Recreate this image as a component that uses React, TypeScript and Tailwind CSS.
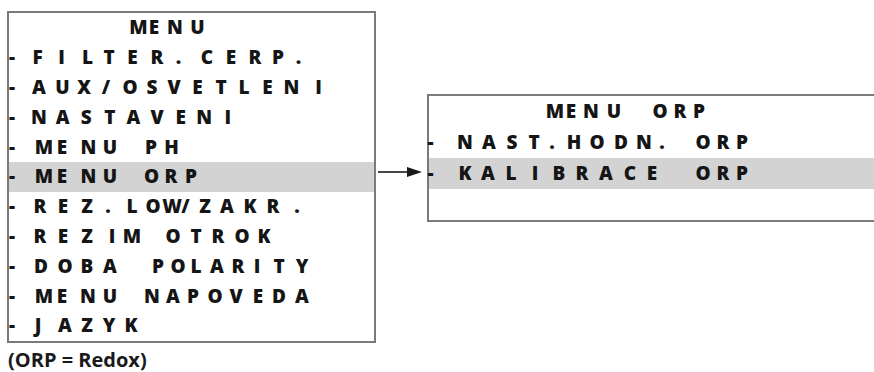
import React from "react";

type Item = [string, number];

function mk(text: string, xs: number[]): Item[] {
  const chars = text.split("");
  return chars.map((c, i) => [c, xs[i]] as Item);
}

const W = 24;

function Line({ items, originX, dashX, hl, h }: { items: Item[]; originX: number; dashX?: number; hl?: boolean; h: "left" | "right" }) {
  const all: Item[] = dashX !== undefined ? [["-", dashX], ...items] : items;
  return (
    <div
      className={
        (h === "left" ? "h-[29.8px] " : "h-[31px] ") +
        (hl ? "bg-[#d3d3d3] " : "") +
        "flex items-center whitespace-nowrap"
      }
    >
      {all.map(([ch, x], i) => {
        const prev = i === 0 ? originX : all[i - 1][1] + W / 2;
        const ml = x - W / 2 - prev;
        return (
          <span key={i} className="inline-block shrink-0 text-center" style={{ width: W, marginLeft: ml }}>
            {ch}
          </span>
        );
      })}
    </div>
  );
}

const LD = 12;
const RD = 430.5;

const leftRows: { items: Item[]; dash: boolean; hl?: boolean }[] = [
  { items: mk("MENU", [138.5, 154, 175, 197.5]), dash: false },
  { items: mk("FILTER.CERP.", [37.5, 61.5, 87.5, 109, 132.5, 157, 178.5, 207, 231, 255, 278, 298.5]), dash: true },
  { items: mk("AUX/OSVETLENI", [39, 62.5, 84, 106, 130, 152, 174, 197.5, 221, 244, 267.5, 291.5, 318.5]), dash: true },
  { items: mk("NASTAVENI", [39, 62.6, 86.2, 109.8, 133.4, 157, 180.6, 204.2, 227.8]), dash: true },
  { items: mk("MENUPH", [44, 62, 88.5, 110, 151, 171.5]), dash: true },
  { items: mk("MENUORP", [44, 62, 88.5, 110, 151.5, 171, 191]), dash: true, hl: true },
  { items: mk("REZ.LOW/ZAKR.", [40, 63, 87, 108, 132, 153, 172, 185.5, 205, 227, 250, 273, 297]), dash: true },
  { items: mk("REZIMOTROK", [40, 63, 87, 112, 132, 173, 196, 218, 242, 264]), dash: true },
  { items: mk("DOBAPOLARITY", [41, 65, 87, 110, 158, 178, 196, 217, 238, 257, 279, 302]), dash: true },
  { items: mk("MENUNAPOVEDA", [44, 62, 88, 110, 152, 173, 193, 215, 236, 258, 279, 302]), dash: true },
  { items: mk("JAZYK", [38, 65, 87, 109, 131]), dash: true },
];

const rightRows: { items: Item[]; dash: boolean; hl?: boolean }[] = [
  { items: mk("MENUORP", [555, 571, 591, 614, 660, 680, 699]), dash: false },
  { items: mk("NAST.HODN.ORP", [465, 489, 512, 534, 552, 574, 597, 621, 644, 662, 703, 723, 742]), dash: true },
  { items: mk("KALIBRACEORP", [465, 488, 511, 535, 559, 582, 606, 630, 652, 703, 723, 742]), dash: true, hl: true },
  { items: [], dash: false },
];

export default function App() {
  return (
    <div className="w-[874px] h-[372px] overflow-hidden bg-white flex items-start font-['Open_Sans',sans-serif] font-extrabold text-[19px] leading-none text-[#151515]">
      <div className="ml-[7px] mt-[11px] flex flex-col w-[369px] shrink-0">
        <div className="border-2 border-[#7a7a7a] flex flex-col">
          {leftRows.map((r, i) => (
            <Line key={i} items={r.items} originX={9} dashX={r.dash ? LD : undefined} hl={r.hl} h="left" />
          ))}
        </div>
        <div className="mt-[6px] pl-[1px] text-[20px] font-bold leading-[22px] text-[#1a1a1a]">(ORP = Redox)</div>
      </div>
      <div className="w-[51px] mt-[166px] shrink-0">
        <svg width="51" height="12" viewBox="0 0 51 12">
          <line x1="2" y1="6" x2="34" y2="6" stroke="#1a1a1a" strokeWidth="1.6" />
          <polygon points="31,1 46,6 31,11" fill="#1a1a1a" />
        </svg>
      </div>
      <div className="mt-[94px] w-[480px] shrink-0 border-2 border-[#7a7a7a] flex flex-col">
        {rightRows.map((r, i) => (
          <Line key={i} items={r.items} originX={429} dashX={r.dash ? RD : undefined} hl={r.hl} h="right" />
        ))}
      </div>
    </div>
  );
}
